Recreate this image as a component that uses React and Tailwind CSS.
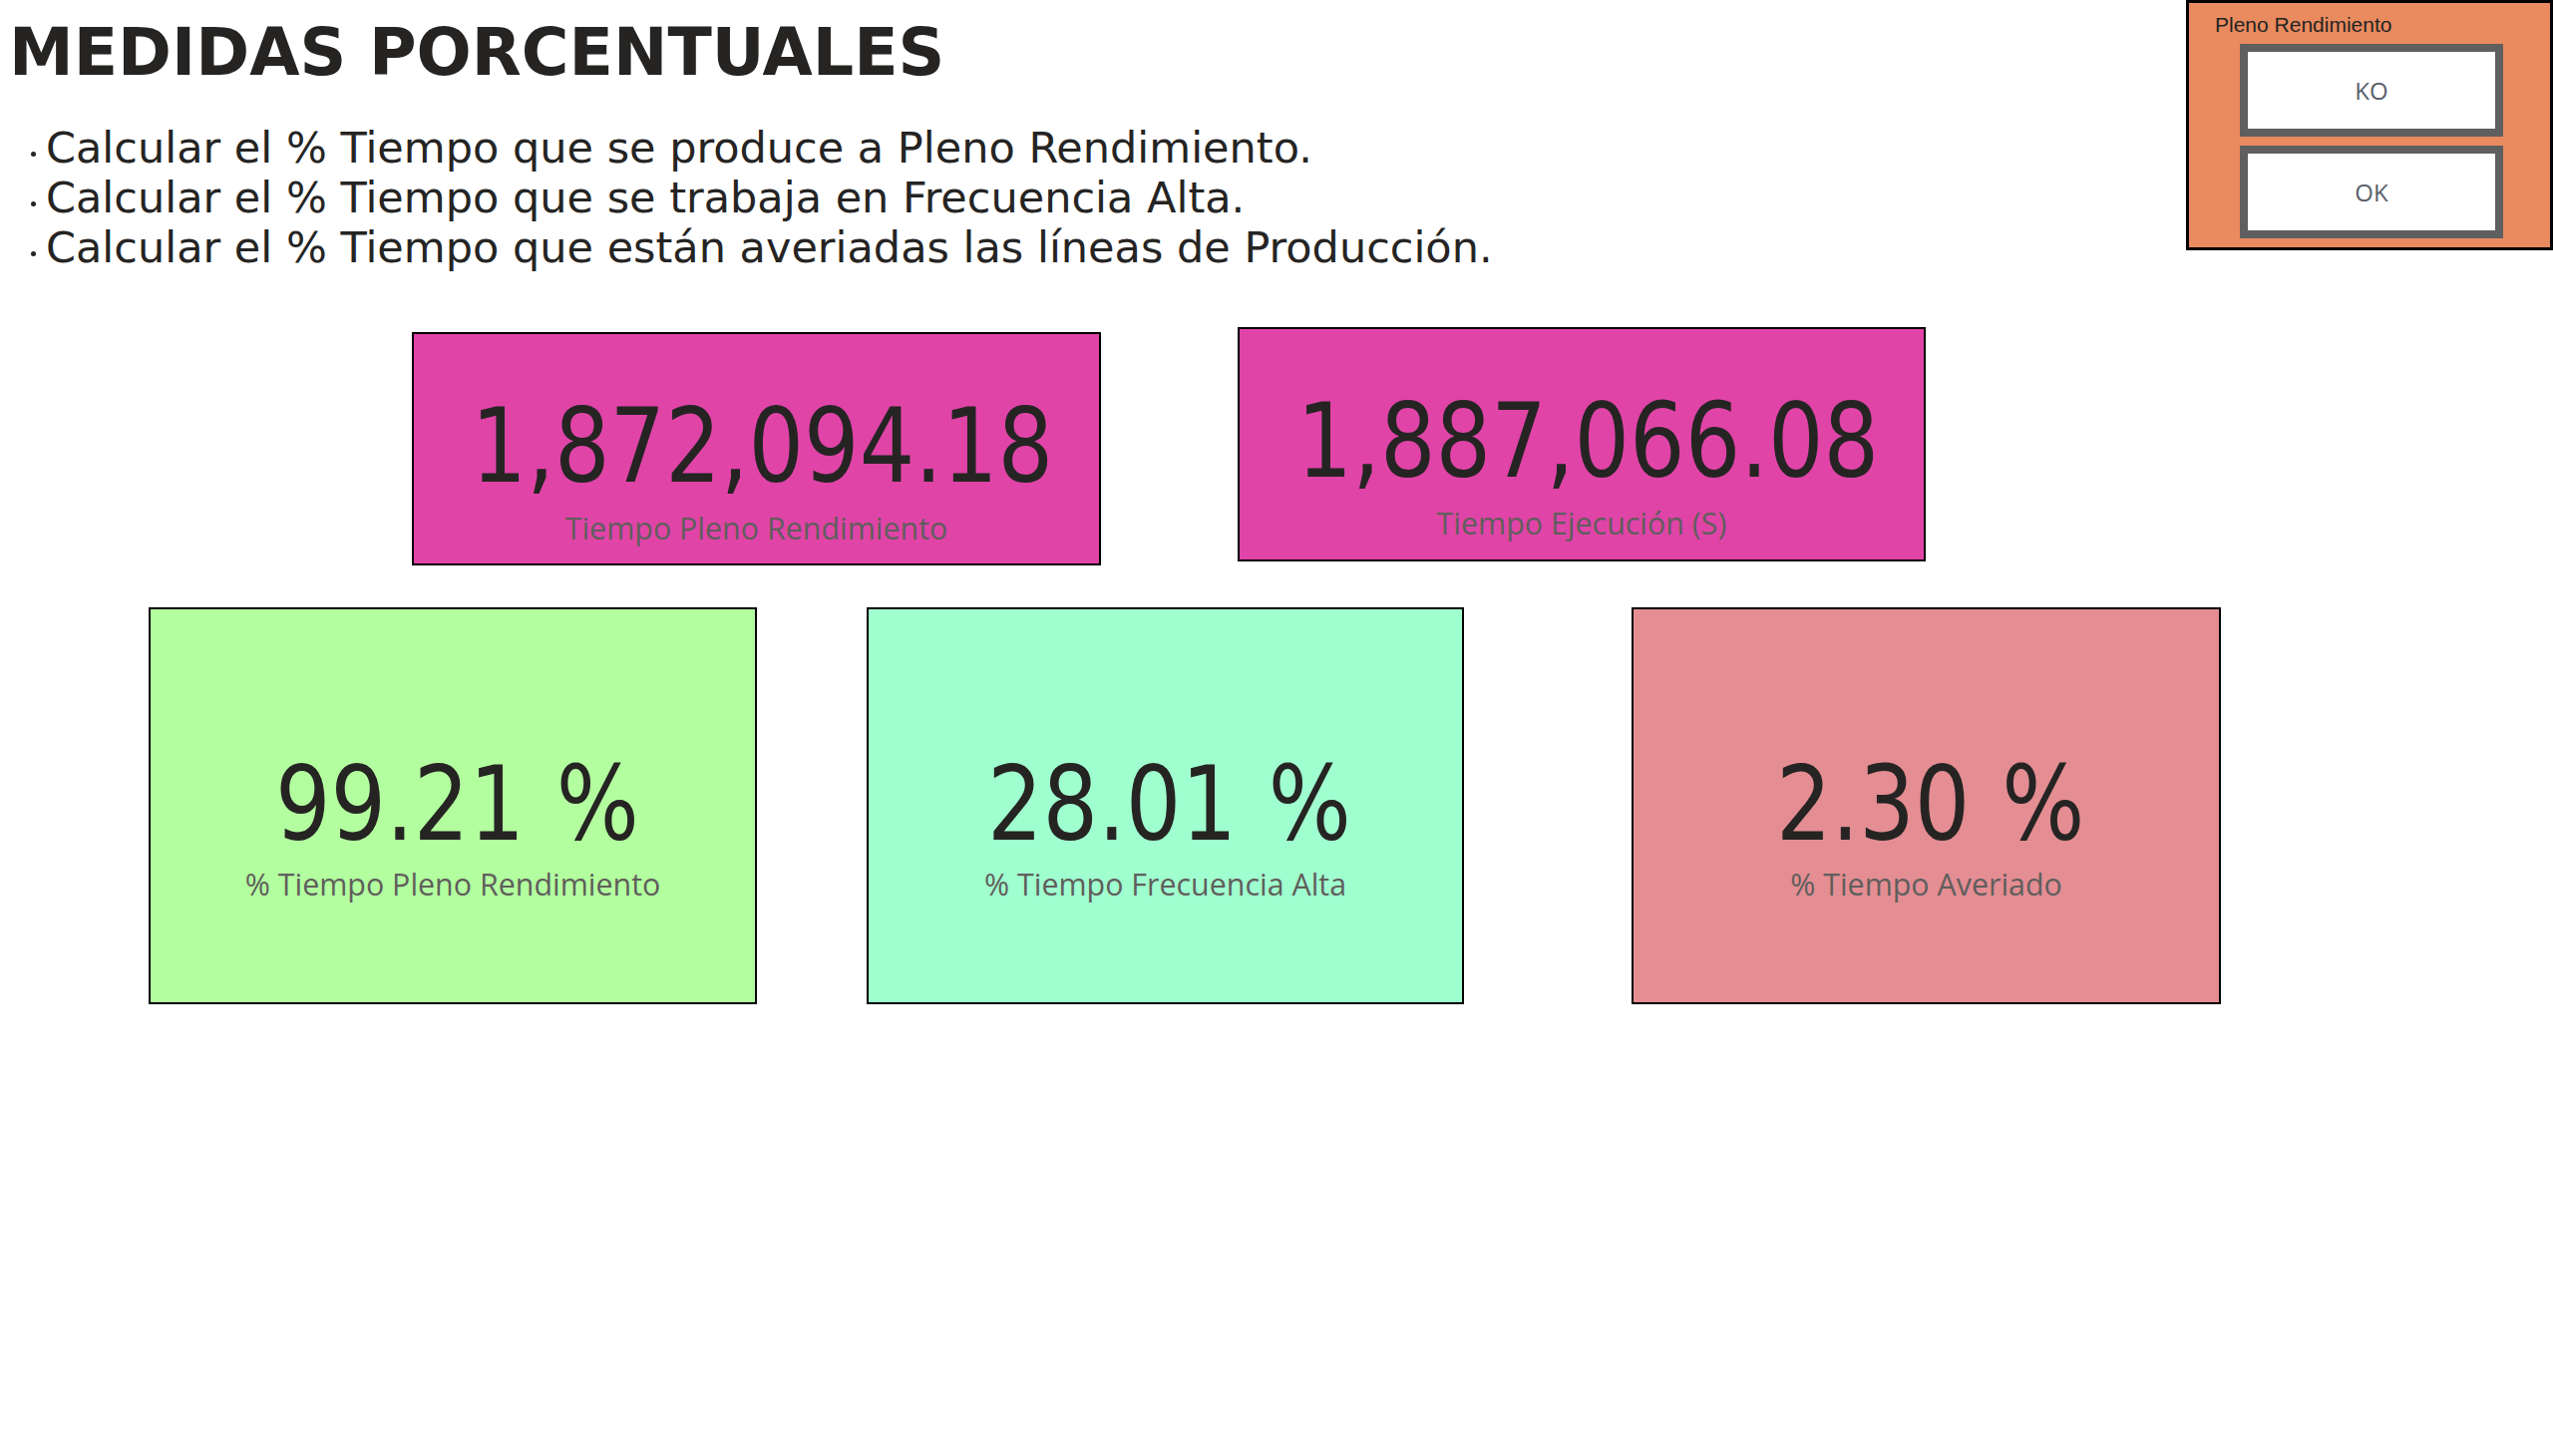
const numFont = "font-['DejaVu_Sans_Condensed','DejaVu_Sans',sans-serif] font-stretch-condensed";

function Kpi({ className, value, unit, label, labelGap, shift }) {
  return (
    <div className={`flex flex-col items-center border-2 border-black ${className}`}>
      <div className={`flex items-baseline ${shift} scale-x-[0.934] text-[104px] leading-none text-[#252423] ${numFont}`}>
        <span>{value}</span>
        {unit && <span className="ml-[34px]">{unit}</span>}
      </div>
      <div className={`${labelGap} text-[30.4px] leading-none text-[#605e5c] font-['Open_Sans',sans-serif]`}>
        {label}
      </div>
    </div>
  );
}

function SlicerButton({ children }) {
  return (
    <div className="w-[264px] h-[93px] border-[8px] border-[#5f5f5f] bg-white flex items-center justify-center text-[24px] text-[#59606a] font-['Open_Sans',sans-serif]">
      {children}
    </div>
  );
}

const tasks = [
  'Calcular el % Tiempo que se produce a Pleno Rendimiento.',
  'Calcular el % Tiempo que se trabaja en Frecuencia Alta.',
  'Calcular el % Tiempo que están averiadas las líneas de Producción.',
];

export default function App() {
  return (
    <div className="w-[2560px] h-[1460px] bg-white overflow-hidden text-[#252423]">
      {/* Header */}
      <div className="h-[328px] flex justify-between items-start">
        <div className="pt-[20px]">
          <h1 className="pl-[9px] text-[65px] leading-none font-bold font-['DejaVu_Sans',sans-serif]">
            MEDIDAS PORCENTUALES
          </h1>
          <ul className="mt-[38px] pl-[31px] text-[43px] leading-[50px] font-['DejaVu_Sans',sans-serif]">
            {tasks.map((t) => (
              <li key={t}>
                <span className="inline-block w-[5px] h-[5px] mb-[6px] mr-[10px] rounded-full bg-[#252423]" />
                {t}
              </li>
            ))}
          </ul>
        </div>

        {/* Slicer */}
        <div className="w-[368px] h-[251px] border-[3px] border-black bg-[#e98a5f] pt-[11px] pl-[26px] flex flex-col">
          <div className="text-[21px] leading-none text-[#252423] font-['Liberation_Sans',sans-serif]">
            Pleno Rendimiento
          </div>
          <div className="mt-[9px] ml-[25px] flex flex-col gap-[9px]">
            <SlicerButton>KO</SlicerButton>
            <SlicerButton>OK</SlicerButton>
          </div>
        </div>
      </div>

      {/* Totals */}
      <div className="flex items-start pl-[413px]">
        <Kpi
          className="w-[691px] h-[234px] mt-[5px] pt-[60px] bg-[#e044a7]"
          shift="ml-[12px]"
          value="1,872,094.18"
          label="Tiempo Pleno Rendimiento"
          labelGap="mt-[16px]"
        />
        <Kpi
          className="ml-[137px] w-[690px] h-[235px] pt-[60px] bg-[#e044a7]"
          shift="ml-[12px]"
          value="1,887,066.08"
          label="Tiempo Ejecución (S)"
          labelGap="mt-[16px]"
        />
      </div>

      {/* Percentages */}
      <div className="mt-[42px] flex items-start pl-[149px]">
        <Kpi
          className="w-[610px] h-[398px] pt-[143px] bg-[#b3ff9f]"
          shift="ml-[8px]"
          value="99.21"
          unit="%"
          label="% Tiempo Pleno Rendimiento"
          labelGap="mt-[14px]"
        />
        <Kpi
          className="ml-[110px] w-[599px] h-[398px] pt-[143px] bg-[#a0ffcf]"
          shift="ml-[8px]"
          value="28.01"
          unit="%"
          label="% Tiempo Frecuencia Alta"
          labelGap="mt-[14px]"
        />
        <Kpi
          className="ml-[168px] w-[591px] h-[398px] pt-[143px] bg-[#e48d93]"
          shift="ml-[8px]"
          value="2.30"
          unit="%"
          label="% Tiempo Averiado"
          labelGap="mt-[14px]"
        />
      </div>
    </div>
  );
}
